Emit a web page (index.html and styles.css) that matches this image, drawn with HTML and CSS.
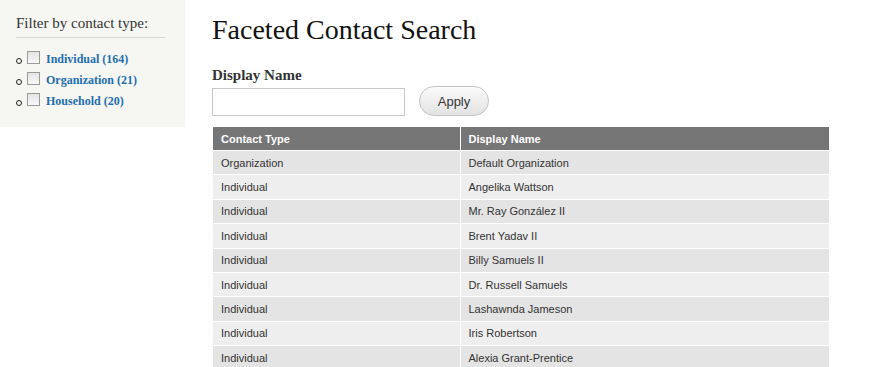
FILE: index.html
```html
<!DOCTYPE html>
<html>
<head>
<meta charset="utf-8">
<link rel="stylesheet" href="styles.css">
</head>
<body>
<div class="page">
  <aside class="sidebar">
    <h2 class="facet-title">Filter by contact type:</h2>
    <ul class="facet-list">
      <li><span class="cb"></span><a href="#">Individual (164)</a></li>
      <li><span class="cb"></span><a href="#">Organization (21)</a></li>
      <li><span class="cb"></span><a href="#">Household (20)</a></li>
    </ul>
  </aside>
  <main class="main">
    <h1 class="title">Faceted Contact Search</h1>
    <label class="label">Display Name</label>
    <div class="form-row">
      <input class="text-input" type="text">
      <button class="btn">Apply</button>
    </div>
    <table class="results">
      <colgroup><col class="col1"><col></colgroup>
      <thead>
        <tr><th>Contact Type</th><th>Display Name</th></tr>
      </thead>
      <tbody>
        <tr><td>Organization</td><td>Default Organization</td></tr>
        <tr><td>Individual</td><td>Angelika Wattson</td></tr>
        <tr><td>Individual</td><td>Mr. Ray González II</td></tr>
        <tr><td>Individual</td><td>Brent Yadav II</td></tr>
        <tr><td>Individual</td><td>Billy Samuels II</td></tr>
        <tr><td>Individual</td><td>Dr. Russell Samuels</td></tr>
        <tr><td>Individual</td><td>Lashawnda Jameson</td></tr>
        <tr><td>Individual</td><td>Iris Robertson</td></tr>
        <tr><td>Individual</td><td>Alexia Grant-Prentice</td></tr>
      </tbody>
    </table>
  </main>
</div>
</body>
</html>
```

FILE: styles.css
```css
html, body {
  margin: 0;
  padding: 0;
  background: #fff;
}
body {
  font-family: "Liberation Serif", "DejaVu Serif", serif;
  color: #333;
  overflow: hidden;
}
.page {
  display: flex;
  align-items: flex-start;
}
.sidebar {
  width: 185px;
  height: 127px;
  box-sizing: border-box;
  background: #f6f6f2;
  padding: 15px 20px 0 16px;
  flex-shrink: 0;
}
.facet-title {
  margin: 0;
  font-size: 15px;
  font-weight: normal;
  color: #333;
  padding-bottom: 6px;
  border-bottom: 1px solid #d6d6d6;
  line-height: 16px;
}
.facet-list {
  margin: 11px 0 0 0;
  padding: 0;
  list-style: none;
}
.facet-list li {
  display: flex;
  align-items: center;
  height: 21px;
  position: relative;
  padding-left: 11px;
}
.facet-list li::before {
  content: "";
  position: absolute;
  left: 0;
  top: 9px;
  width: 4px;
  height: 4px;
  border: 1px solid #222;
  border-radius: 50%;
}
.cb {
  width: 11px;
  height: 11px;
  border: 1px solid #9a9a9a;
  background: linear-gradient(#e4e4e4, #f8f8f8);
  margin-right: 6px;
  margin-top: -4px;
}
.facet-list a {
  color: #1f6fae;
  text-decoration: none;
  font-size: 12px;
  font-weight: bold;
}
.main {
  padding-left: 27px;
  flex: 1;
}
.title {
  margin: 14px 0 0 0;
  font-size: 28px;
  line-height: 32px;
  font-weight: normal;
  color: #111;
}
.label {
  display: block;
  margin-top: 20px;
  font-size: 15px;
  font-weight: bold;
  line-height: 18px;
  color: #333;
}
.form-row {
  display: flex;
  align-items: center;
  margin-top: 2px;
}
.text-input {
  width: 193px;
  height: 28px;
  box-sizing: border-box;
  border: 1px solid #c8c8c8;
  margin: 1px 0 0 0;
  padding: 0 4px;
}
.btn {
  margin-left: 14px;
  width: 70px;
  height: 30px;
  border: 1px solid #c4c4c4;
  border-radius: 15px;
  background: linear-gradient(#fbfbfb, #e2e2e2);
  font-family: "Liberation Sans", Arial, sans-serif;
  font-size: 13px;
  color: #333;
}
.results {
  margin-top: 11px;
  margin-left: 1px;
  border-collapse: collapse;
  table-layout: fixed;
  width: 617px;
  font-family: "Liberation Sans", Arial, sans-serif;
  font-size: 11px;
  color: #333;
}
.col1 {
  width: 247px;
}
.results th {
  background: #767676;
  color: #fff;
  font-weight: bold;
  text-align: left;
  height: 23px;
  padding: 0 8px;
  border: 1px solid #fff;
  border-top: 0;
  border-left: 0;
}
.results td {
  height: 23.4px;
  padding: 0 8px;
  border: 1px solid #fff;
  border-left: 0;
}
.results tbody tr:nth-child(odd) td {
  background: #e4e4e4;
}
.results tbody tr:nth-child(even) td {
  background: #eeeeee;
}
```
